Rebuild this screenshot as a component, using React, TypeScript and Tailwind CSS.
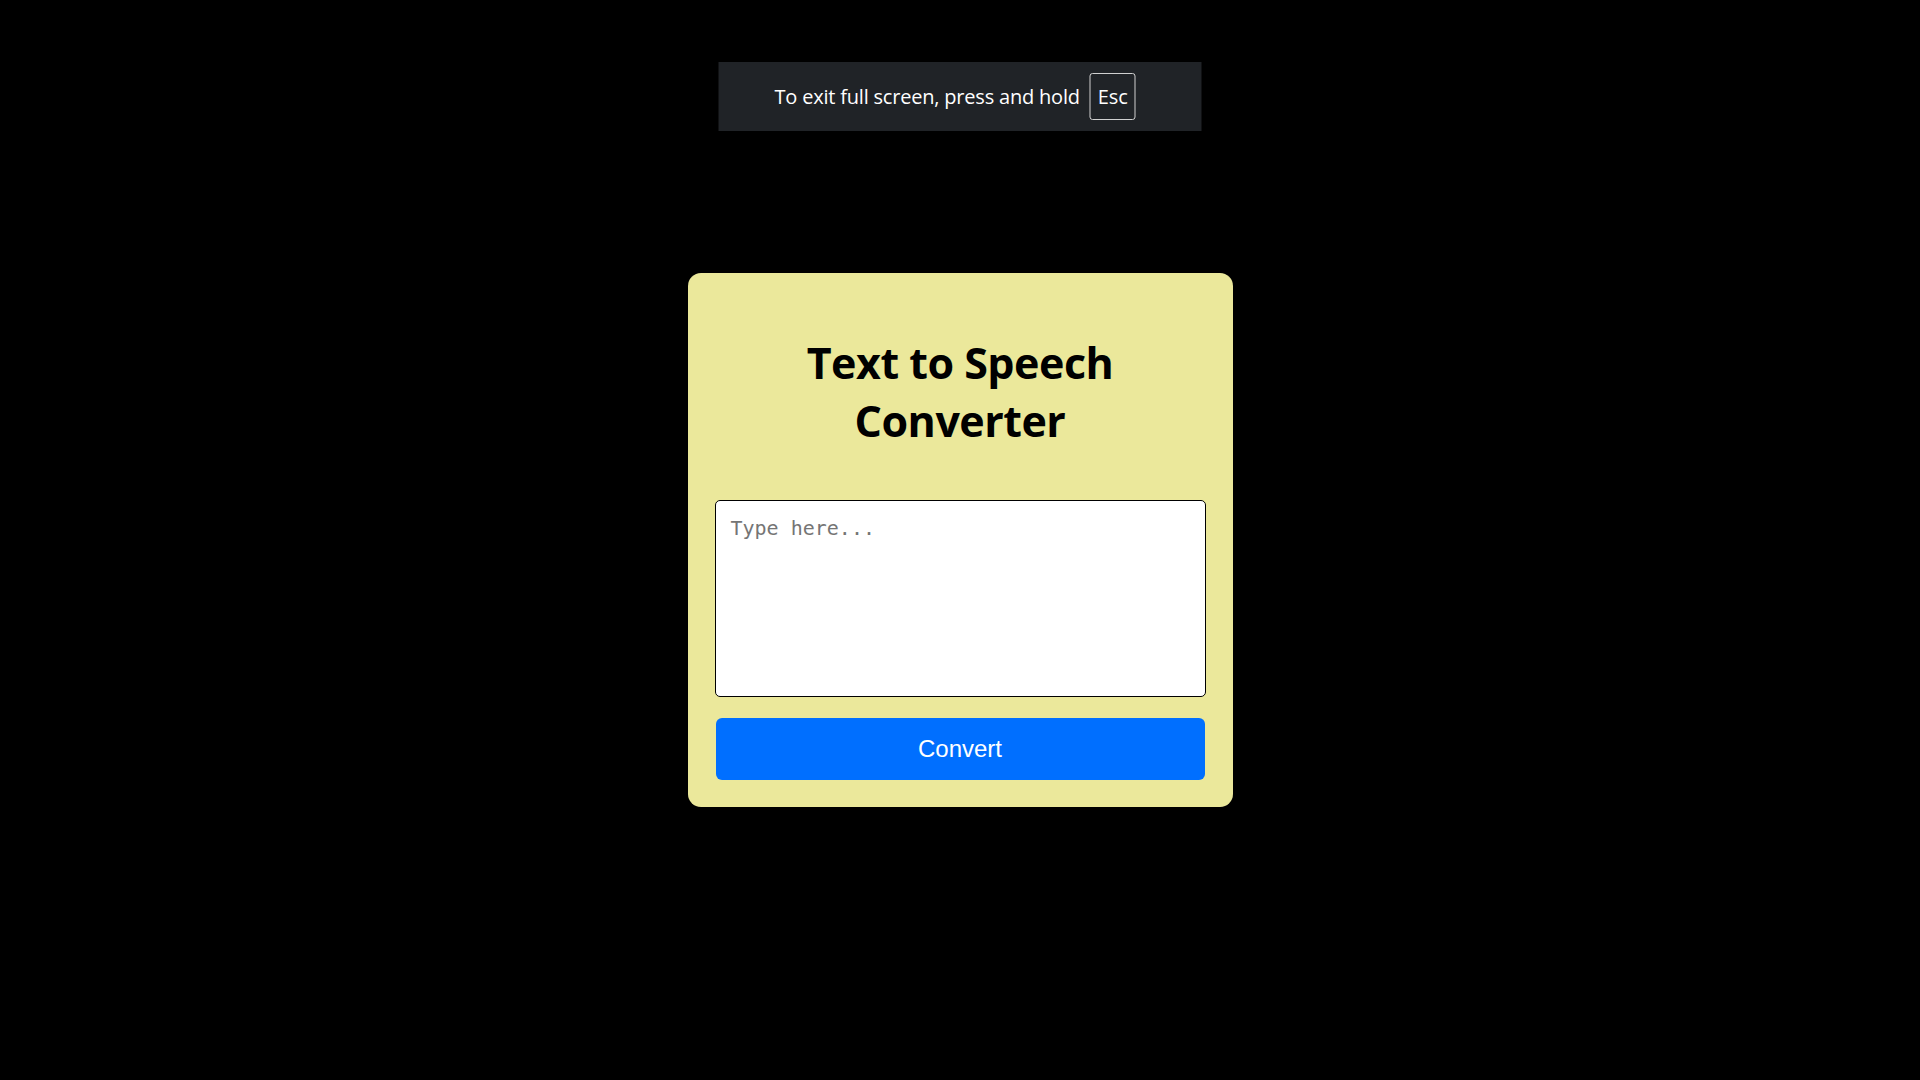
import React from "react";

export default function App() {
  return (
    <div className="relative min-h-screen w-full bg-black flex items-center justify-center">
      <div className="absolute top-[62px] left-1/2 -translate-x-1/2 w-[483px] h-[69px] bg-[#202327] flex items-center justify-start pl-[56px] gap-[10px] text-white text-[20px] font-['Open_Sans','Noto_Sans',sans-serif]">
        <span className="tracking-[-0.2px]">To exit full screen, press and hold</span>
        <span className="border border-[#d0d0d0] rounded-[3px] w-[46px] h-[47px] flex items-center justify-center">Esc</span>
      </div>

      <div className="w-[545px] h-[534px] bg-[#ebe89b] rounded-[13px] flex flex-col items-center px-[27px] pt-[61px]">
        <h1 className="text-center font-bold text-black text-[43px] leading-[58px] tracking-[-0.5px] font-['Open_Sans','Noto_Sans',sans-serif]">
          Text to Speech
          <br />
          Converter
        </h1>
        <textarea
          placeholder="Type here..."
          className="mt-[50px] w-[491px] h-[197px] bg-white border border-black rounded-[5px] px-[15px] py-[12px] text-[20px] font-['DejaVu_Sans_Mono',monospace] placeholder:text-[#757575] resize-none outline-none"
        />
        <button className="mt-[21px] w-[489px] h-[62px] bg-[#006fff] rounded-[6px] text-white text-[24px] font-['Liberation_Sans',Arial,sans-serif]">
          Convert
        </button>
      </div>
    </div>
  );
}
